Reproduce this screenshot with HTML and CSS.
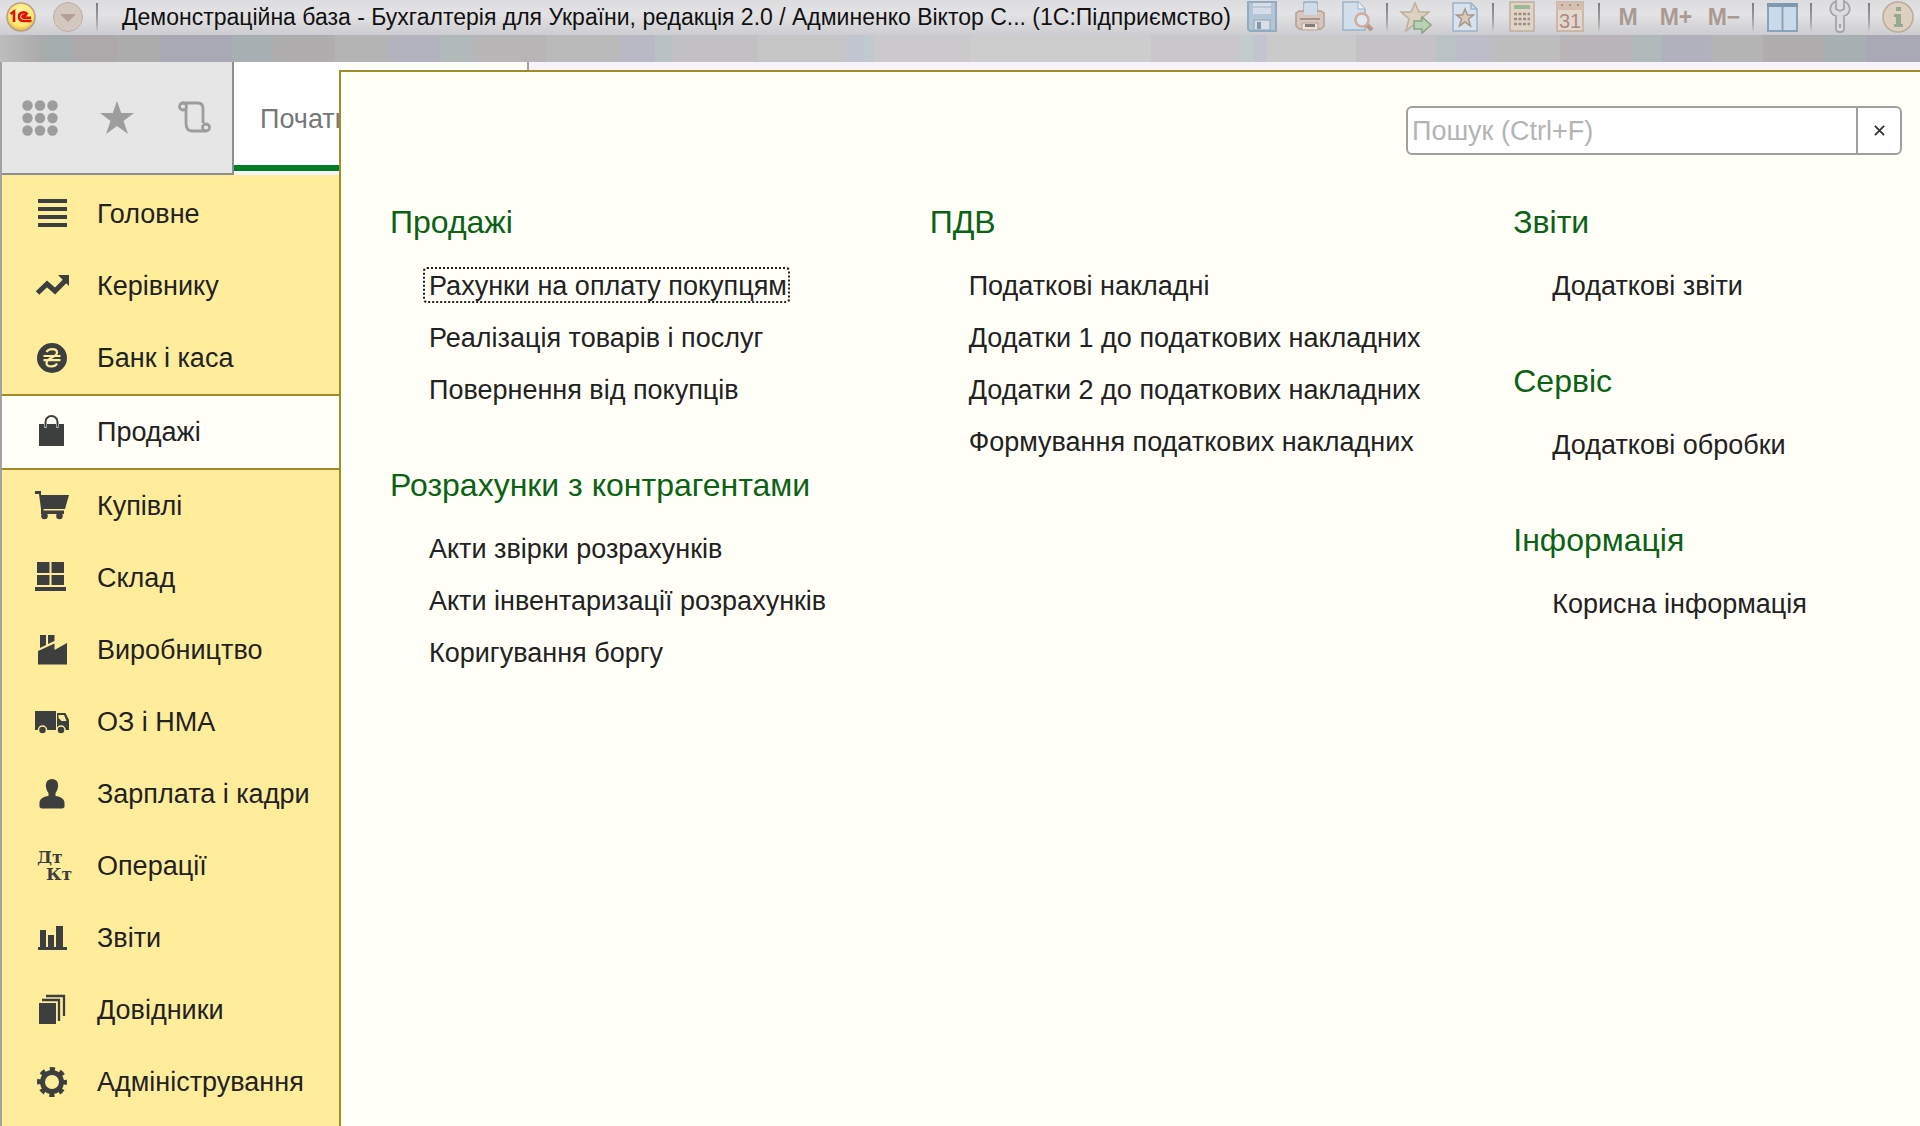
FILE: index.html
```html
<!DOCTYPE html>
<html lang="uk">
<head>
<meta charset="utf-8">
<title>Бухгалтерія для України</title>
<link rel="stylesheet" href="styles.css">
</head>
<body>
<header class="titlebar">
  <div class="titlebar-row">
    <svg class="logo" viewBox="0 0 30 30" aria-hidden="true">
      <defs><radialGradient id="gold" cx=".5" cy=".4" r=".6"><stop offset="0" stop-color="#fff8c0"/><stop offset=".7" stop-color="#fde96c"/><stop offset="1" stop-color="#dcae48"/></radialGradient></defs>
      <circle cx="15" cy="15" r="14" fill="url(#gold)" stroke="#b9a08a" stroke-width="1.500"/>
      <path d="M4.500 12l3.500-2.500v10.500M21.500 12.500c-2-3.500-8.500-2.500-8.500 2 0 3 2 4.500 4.500 4.500h8M20.500 14c-1.500-1.500-4-.8-4 .6 0 1 .8 1.200 1.600 1.200h7" fill="none" stroke="#e01408" stroke-width="2.600"/>
    </svg>
    <button class="menu-button" aria-label="Головне меню">
      <svg viewBox="0 0 32 32"><circle cx="16" cy="16" r="14.500" fill="#d3c8c0" stroke="#bdaea6"/><path d="M8 13h16l-8 8z" fill="#b3a096"/></svg>
    </button>
    <span class="sep"></span>
    <h1 class="title">Демонстраційна база - Бухгалтерія для України, редакція 2.0 / Админенко Віктор С... (1С:Підприємство)</h1>
    <div class="tools">
      <div class="tool-group">
        <button class="tool" aria-label="Зберегти"><svg viewBox="0 0 32 32"><path d="M2 1h28v29H4l-2-2z" fill="#b3c6d6" stroke="#93abc0" stroke-width="2"/><path d="M7 2h18v11H7z" fill="#d5dee8"/><path d="M7 6h18" stroke="#b7c9d8" stroke-width="2"/><path d="M8 19h16v10H8z" fill="#d9dfe7" stroke="#8ea5ba"/><path d="M11 21h4v7h-4z" fill="#8198b0"/></svg></button>
        <button class="tool" aria-label="Друк"><svg viewBox="0 0 32 32"><path d="M10 1h13v12H10z" fill="#cfdce8" stroke="#97adc2" stroke-width="1.500"/><path d="M2 12l3-2h22l3 2v13l-3 3H5l-3-3z" fill="#d6c6bd" stroke="#b59f95" stroke-width="1.500"/><path d="M10 3h13v11H10z" fill="#cfdce8"/><path d="M6 18h20" stroke="#a99389" stroke-width="2"/><path d="M8 22h16v7H8z" fill="#eae3dc" stroke="#b59f95"/><path d="M11 23h10v3H11z" fill="#857a78"/></svg></button>
        <button class="tool" aria-label="Попередній перегляд"><svg viewBox="0 0 32 32"><path d="M1 1h15l7 7v21H1z" fill="#d2deea" stroke="#9bb3c9" stroke-width="1.500"/><path d="M16 1v7h7" fill="#edf1f5" stroke="#9bb3c9"/><path d="M23 22l7 7" stroke="#b59a8d" stroke-width="4.500"/><circle cx="20" cy="19" r="6.500" fill="#dfe7f2" stroke="#cfae9c" stroke-width="2.500"/></svg></button>
      </div>
      <span class="sep"></span>
      <div class="tool-group">
        <button class="tool" aria-label="Додати в обране"><svg viewBox="0 0 32 32"><path d="M15 2l4 9h10l-8 7 3 11-9-6-9 7 3-12-8-7h10z" fill="#ddd1c1" stroke="#bfae9f" stroke-width="1.500"/><path d="M14 20h8v-4l9 8-9 8v-4h-8z" fill="#bcd0b5" stroke="#87a684" stroke-width="1.500"/></svg></button>
        <button class="tool" aria-label="Обране"><svg viewBox="0 0 32 32"><path d="M5 2h18l6 6v22H5z" fill="#d9e2ec" stroke="#9db2c7" stroke-width="1.500"/><path d="M23 2v6h6" fill="none" stroke="#9db2c7" stroke-width="1.500"/><path d="M17 8l2.500 6h6l-5 4 2 7-5.500-4-5.500 4 2-7-5-4h6z" fill="#d6cabb" stroke="#a79788" stroke-width="1.500"/></svg></button>
      </div>
      <span class="sep"></span>
      <div class="tool-group">
        <button class="tool" aria-label="Калькулятор"><svg viewBox="0 0 32 32"><path d="M4 1h24v29H4z" fill="#e0d5c5" stroke="#bfaf9f" stroke-width="1.500"/><path d="M8 4h16v4H8z" fill="#9fb897"/><path d="M8 13h16M8 18h16M8 23h16" stroke="#9c8d87" stroke-width="2.500" stroke-dasharray="3 1.500"/></svg></button>
        <button class="tool" aria-label="Календар"><svg viewBox="0 0 32 32"><path d="M3 1h26v29H3z" fill="#e3d8cb" stroke="#c3ad9c" stroke-width="1.500"/><path d="M3 1h26v8H3z" fill="#d5bfae"/><path d="M7 4h2M15 4h2M23 4h2" stroke="#a98f80" stroke-width="2"/><text x="16" y="27" class="calendar-day">31</text></svg></button>
      </div>
      <span class="sep"></span>
      <div class="tool-group">
        <button class="tool memory">M</button>
        <button class="tool memory">M+</button>
        <button class="tool memory">M−</button>
      </div>
      <span class="sep"></span>
      <button class="tool" aria-label="Вікна"><svg viewBox="0 0 32 32"><path d="M2 3h29v27H2z" fill="#cbdaeb" stroke="#8ba3b8" stroke-width="2"/><path d="M1 2h31v4H1z" fill="#7f98ad"/><path d="M16.500 6v23" stroke="#8ba3b8" stroke-width="2"/></svg></button>
      <span class="sep"></span>
      <button class="tool" aria-label="Сервіс"><svg viewBox="0 0 32 32"><path d="M12 0c-8 4-7 13 0 15v13c0 4 8 4 8 0V15c7-2 8-11 0-15v8l-4 2-4-2z" fill="#dcdce0" stroke="#a5a5aa" stroke-width="1.800"/><path d="M16 23v4" stroke="#a5a5aa" stroke-width="2"/></svg></button>
      <span class="sep"></span>
      <button class="tool" aria-label="Довідка"><svg viewBox="0 0 32 32"><circle cx="16" cy="16" r="15" fill="#ddd0c0" stroke="#bcab9c" stroke-width="1.500"/><path d="M14 6h5v4h-5zM12 13h7v10h2v3h-9v-3h2v-7h-2z" fill="#96aa91"/></svg></button>
    </div>
  </div>
</header>

<main class="workspace">
  <div class="tabbar">
    <div class="quick">
      <button class="quick-button" aria-label="Меню функцій"><svg viewBox="0 0 36 36" fill="#9d9d9d"><circle cx="5.500" cy="5.500" r="5.200"/><circle cx="18" cy="5.500" r="5.200"/><circle cx="30.500" cy="5.500" r="5.200"/><circle cx="5.500" cy="18" r="5.200"/><circle cx="18" cy="18" r="5.200"/><circle cx="30.500" cy="18" r="5.200"/><circle cx="5.500" cy="30.500" r="5.200"/><circle cx="18" cy="30.500" r="5.200"/><circle cx="30.500" cy="30.500" r="5.200"/></svg></button>
      <button class="quick-button" aria-label="Обране"><svg viewBox="0 0 36 36"><path d="M19 1l4.200 12H36l-10.500 8L30 34l-11-8L8 34l4.500-13L2 13h12.800z" fill="#9d9d9d"/></svg></button>
      <button class="quick-button" aria-label="Історія"><svg viewBox="0 0 36 36" fill="none" stroke="#9d9d9d" stroke-width="2.800"><path d="M8 3h16q5 0 5 6v14M12 8v15q0 8 6 8h14"/><circle cx="9" cy="6.500" r="3.500"/><circle cx="32" cy="27.500" r="3.500"/></svg></button>
    </div>
    <button class="tab">Початкова сторінка</button>
  </div>

  <nav class="sections" aria-label="Розділи">
    <a class="section" href="#main"><svg viewBox="0 0 32 32"><path d="M2 1h29v4H2zM2 9h29v4H2zM2 17h29v4H2zM2 25h29v4H2z"/></svg>Головне</a>
    <a class="section" href="#manager"><svg viewBox="0 0 32 32"><path d="M1.500 23L11 14l8 7L29 11" fill="none" stroke="#3c3f3e" stroke-width="5"/><path d="M22 5h11v11z"/></svg>Керівнику</a>
    <a class="section" href="#bank"><svg viewBox="0 0 32 32"><circle cx="16" cy="16" r="15"/><path d="M10.500 10c2-4 10.500-4 10.500.5 0 5-10.500 5-10.500 10.500 0 4.500 8.500 4.500 10.500.5M7.500 14h17M7.500 18.200h17" fill="none" stroke="#ffed9c" stroke-width="2.200"/></svg>Банк і каса</a>
    <a class="section current" href="#sales" aria-current="page"><svg viewBox="0 0 32 32"><path d="M3 8h5v3a2 2 0 0 0 3 0V8h9v3a2 2 0 0 0 3 0V8h5v22H3z"/><path d="M9.500 11V6a6 6 0 0 1 12 0V11" fill="none" stroke="#3c3f3e" stroke-width="2"/></svg>Продажі</a>
    <a class="section" href="#purchases"><svg viewBox="0 0 32 32"><path d="M-1 1h6v4h28l-4 14H7.500v1.500H28V24H5V19L3 4H-1z"/><circle cx="8.500" cy="26" r="3.300"/><circle cx="23.500" cy="26" r="3.300"/></svg>Купівлі</a>
    <a class="section" href="#warehouse"><svg viewBox="0 0 32 32"><path d="M1 0h12.500v11H1zM15.500 0H28v11H15.500zM1 13h12.500v10H1zM15.500 13H28v10H15.500zM-1 25h31v4H-1z"/></svg>Склад</a>
    <a class="section" href="#production"><svg viewBox="0 0 32 32"><path d="M4 1h6v10l-6 3zM12 1h6.500v6L12 10zM2 17l16.500-7.500V16L31 9v21.500H2z"/></svg>Виробництво</a>
    <a class="section" href="#assets"><svg viewBox="0 0 32 32"><path d="M-1 5h21v19H-1z"/><path d="M21 7h8.500l3.500 7v10H21z"/><path d="M22.500 9h5.500l2.500 6h-5l-3-3z" fill="#ffed9c"/><circle cx="6.500" cy="24" r="4" stroke="#ffed9c" stroke-width="1.500"/><circle cx="25" cy="24" r="4" stroke="#ffed9c" stroke-width="1.500"/></svg>ОЗ і НМА</a>
    <a class="section" href="#salary"><svg viewBox="0 0 32 32"><path d="M16 1c7.500 0 7.500 9 3.500 14v3C25 18.500 28.500 21 28.500 25v4q-1 1.500-3 1.500h-19q-2 0-3-1.500v-4c0-4 3.500-6.500 9-7v-3C8.500 10 8.500 1 16 1z"/></svg>Зарплата і кадри</a>
    <a class="section" href="#operations"><svg viewBox="0 0 32 32"><text x="1" y="13" class="ledger">Дт</text><text x="10" y="30" class="ledger">Кт</text></svg>Операції</a>
    <a class="section" href="#reports"><svg viewBox="0 0 32 32"><path d="M4 8h6v17h2V13h6v12h2V4h7v21h4v3H2v-3h2z"/></svg>Звіти</a>
    <a class="section" href="#catalogs"><svg viewBox="0 0 32 32"><path d="M3 9h17v21H3z"/><path d="M6 6h17v21M10 2h18v20" fill="none" stroke="#3c3f3e" stroke-width="2.300"/></svg>Довідники</a>
    <a class="section" href="#admin"><svg viewBox="0 0 32 32"><circle cx="16" cy="16" r="9.500" fill="none" stroke="#3c3f3e" stroke-width="5"/><circle cx="16" cy="16" r="13" fill="none" stroke="#3c3f3e" stroke-width="4" stroke-dasharray="5.200 5.010" stroke-dashoffset="2.600"/></svg>Адміністрування</a>
  </nav>

  <section class="panel">
    <form class="search" role="search">
      <input class="search-input" type="text" placeholder="Пошук (Ctrl+F)" aria-label="Пошук">
      <button class="search-clear" type="reset" aria-label="Очистити"><svg viewBox="0 0 12 12"><path d="M1 1l10 10M11 1L1 11" stroke="#333" stroke-width="2"/></svg></button>
    </form>
    <div class="columns">
      <div class="column">
        <section class="group">
          <h2>Продажі</h2>
          <ul>
            <li><a class="focused" href="#invoices">Рахунки на оплату покупцям</a></li>
            <li><a href="#realization">Реалізація товарів і послуг</a></li>
            <li><a href="#returns">Повернення від покупців</a></li>
          </ul>
        </section>
        <section class="group">
          <h2>Розрахунки з контрагентами</h2>
          <ul>
            <li><a href="#reconciliation">Акти звірки розрахунків</a></li>
            <li><a href="#inventory">Акти інвентаризації розрахунків</a></li>
            <li><a href="#debt">Коригування боргу</a></li>
          </ul>
        </section>
      </div>
      <div class="column">
        <section class="group">
          <h2>ПДВ</h2>
          <ul>
            <li><a href="#tax">Податкові накладні</a></li>
            <li><a href="#tax1">Додатки 1 до податкових накладних</a></li>
            <li><a href="#tax2">Додатки 2 до податкових накладних</a></li>
            <li><a href="#taxform">Формування податкових накладних</a></li>
          </ul>
        </section>
      </div>
      <div class="column">
        <section class="group">
          <h2>Звіти</h2>
          <ul><li><a href="#extrareports">Додаткові звіти</a></li></ul>
        </section>
        <section class="group">
          <h2>Сервіс</h2>
          <ul><li><a href="#processing">Додаткові обробки</a></li></ul>
        </section>
        <section class="group">
          <h2>Інформація</h2>
          <ul><li><a href="#info">Корисна інформація</a></li></ul>
        </section>
      </div>
    </div>
  </section>
</main>
</body>
</html>
```
FILE: styles.css
```css
* { box-sizing: border-box; }

body {
  margin: 0;
  min-height: 100vh;
  display: flex;
  flex-direction: column;
  font: 27px/32px "Liberation Sans", Arial, sans-serif;
  color: #222;
  background: #f6f4fa;
}

button {
  padding: 0;
  border: 0;
  background: none;
  font: inherit;
  color: inherit;
}

a { color: inherit; text-decoration: none; }

svg { display: block; overflow: visible; }

/* Window title */
.titlebar {
  height: 62px;
  flex: none;
  background: linear-gradient(90deg,
    #bdbdbd 0, #a9a9a9 45px, #a5acae 45px 72px, #ada9ab 72px 118px, #acacac 118px 160px,
    #a9a9b5 160px 232px, #a8b0b3 232px 272px, #b0adaf 272px 335px, #b4b4b4 335px 388px,
    #b3b3bd 388px 440px, #b1b9bb 440px 473px, #b8b5b7 473px 546px, #bababa 546px 619px,
    #b9b9c5 619px 655px, #b8c2c5 655px 673px, #c3c0c3 673px 758px, #c6c6c6 758px 846px,
    #c2c4d0 846px 863px, #c0c9cd 863px 874px, #cbc9cc 874px 970px, #cdcdcd 970px 1151px,
    #cac7ca 1151px 1241px, #c3cccd 1241px 1253px, #c4c4d0 1253px 1267px, #cacaca 1267px 1356px,
    #c5c2c5 1356px 1436px, #b9c3c6 1436px 1457px, #bdbdc9 1457px 1490px, #bdbdbd 1490px 1560px,
    #b8b4b7 1560px 1631px, #b1b9bb 1631px 1661px, #b1b1bd 1661px 1711px, #b4b4b4 1711px 1763px,
    #b0adaf 1763px 1824px, #a8b0b3 1824px 1866px, #a9a9b5 1866px);
}

.titlebar-row {
  display: flex;
  align-items: center;
  height: 35px;
  padding: 0 6px 2px 6px;
  background: linear-gradient(#dcdbde, #e3e2e4 40%, #cdcdd1);
}

.logo { width: 30px; height: 30px; flex: none; }

.menu-button { width: 32px; height: 32px; margin-left: 16px; flex: none; }

.sep {
  width: 2px;
  height: 28px;
  margin: 0 12px;
  flex: none;
  background: linear-gradient(#808084, #a0a0a4 60%, #c8c8cc);
}

.title {
  margin: 0 0 0 12px;
  font-size: 23px;
  font-weight: 400;
  line-height: 32px;
  color: #111;
  white-space: nowrap;
}

.tools { display: flex; align-items: center; margin-left: auto; }

.tool-group { display: flex; gap: 16px; }

.tool {
  display: flex;
  justify-content: center;
  align-items: center;
  width: 32px;
  height: 32px;
  flex: none;
}

.tool svg, .menu-button svg { width: 32px; height: 32px; }

.memory { font-size: 23px; font-weight: 700; color: #a99a93; }

.calendar-day { font-size: 20px; text-anchor: middle; fill: #a98a86; }

/* Workspace */
.workspace {
  position: relative;
  flex: 1;
  display: flex;
  flex-direction: column;
  border-left: 2px solid #a2a2a6;
}

.tabbar { display: flex; height: 113px; flex: none; }

.quick {
  display: flex;
  align-items: center;
  gap: 40px;
  width: 232px;
  padding: 0 20px;
  background: #e6e6e6;
  border-right: 2px solid #8e8e8e;
  border-bottom: 2px solid #8e8e8e;
}

.quick-button { width: 36px; height: 36px; }

.quick-button svg { width: 36px; height: 36px; }

.tab {
  width: 295px;
  margin-bottom: 4px;
  padding: 10px 26px 0;
  text-align: left;
  white-space: nowrap;
  color: #777;
  background: #fff;
  border-right: 2px solid #a2a2a6;
  border-bottom: 6px solid #007d25;
}

.sections {
  flex: 1;
  width: 338px;
  padding-top: 3px;
  background: #ffed9c;
}

.section {
  display: flex;
  align-items: center;
  gap: 29px;
  height: 72px;
  padding-left: 34px;
  white-space: nowrap;
}

.section svg { width: 32px; height: 32px; flex: none; fill: #3c3f3e; }

.section.current {
  height: 76px;
  background: #fffff8;
  border-top: 2px solid #a08c28;
  border-bottom: 2px solid #a08c28;
}

.ledger { font: 700 17px "DejaVu Serif", serif; }

/* Section menu lies over the tab bar */
.panel {
  position: absolute;
  top: 8px;
  right: 0;
  bottom: 0;
  left: 337px;
  padding: 34px 18px 0 49px;
  background: #fffff8;
  border-top: 2px solid #a08c28;
  border-left: 2px solid #a08c28;
}

.search {
  display: flex;
  width: 496px;
  height: 49px;
  margin: 0 0 0 auto;
  background: #fff;
  border: 2px solid #a0a0a0;
  border-radius: 6px;
}

.search-input {
  flex: 1;
  min-width: 0;
  padding: 0 4px;
  border: 0;
  background: none;
  font: inherit;
  color: #222;
}

.search-input::placeholder { color: #b4b4b4; opacity: 1; }

.search-clear {
  display: flex;
  justify-content: center;
  align-items: center;
  width: 44px;
  border-left: 2px solid #a0a0a0;
}

.search-clear svg { width: 11px; height: 11px; }

.columns {
  display: grid;
  grid-template-columns: 540fr 584fr 389fr;
  margin-top: 47px;
}

.group { margin-bottom: 59px; }

.group h2 {
  margin: 0 0 26px;
  font-size: 32px;
  font-weight: 400;
  line-height: 40px;
  color: #0b6114;
  white-space: nowrap;
}

.group ul {
  display: flex;
  flex-direction: column;
  align-items: flex-start;
  gap: 18px;
  margin: 0;
  padding: 0 0 0 34px;
  list-style: none;
}

.group li a {
  display: block;
  padding: 2px 2px 0 5px;
  white-space: nowrap;
}

.group .focused { border-radius: 3px; outline: 2px dotted #222; outline-offset: -1px; }
```
